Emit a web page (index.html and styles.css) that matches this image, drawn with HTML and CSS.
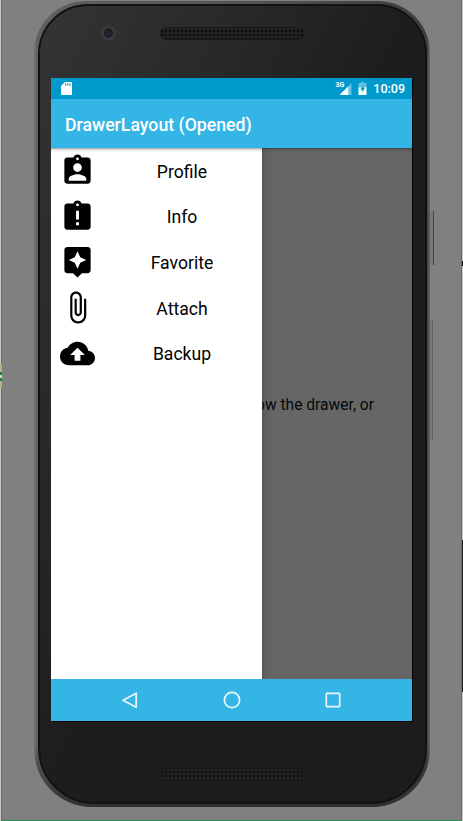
FILE: index.html
```html
<!DOCTYPE html>
<html lang="en">
<head>
<meta charset="utf-8">
<title>DrawerLayout (Opened)</title>
<link rel="stylesheet" href="styles.css">
</head>
<body>
<main class="canvas">
  <i class="mark mark-left"></i><i class="mark mark-right"></i><i class="mark mark-edge"></i>
  <div class="phone">
    <i class="key power"></i><i class="key volume"></i>
    <div class="face">
      <div class="forehead"><i class="camera"></i><i class="speaker"></i></div>
      <div class="screen">
        <div class="status">
          <svg class="sd" width="11" height="13" viewBox="0 0 11 13"><path fill="#fff" d="M4 0h6q1 0 1 1v11q0 1-1 1H1q-1 0-1-1V4z"/><path stroke="#0099cc" stroke-width="1.1" d="M4.6 1.3v2.5M6.8 1.3v2.5M9 1.3v2.5"/></svg>
          <div class="signal"><span>3G</span><svg width="13" height="12" viewBox="0 0 13 12"><path fill="#66c2e0" d="M12.5 0v12H9V3.5z"/><path fill="#fff" d="M9.3 3.2V12H.5z"/></svg></div>
          <svg class="battery" width="9" height="13" viewBox="0 0 9 13"><path fill="#66c2e0" d="M3 0h3v1h2.500v5H.5V1H3z"/><path fill="#fff" d="M.5 5.500h8V13h-8z"/><path fill="#0099cc" d="M5.500 3 2.200 7.500h2v3L7 6.300H5.500z"/></svg>
          <span class="clock">10:09</span>
        </div>
        <header class="appbar"><h1>DrawerLayout (Opened)</h1></header>
        <div class="content">
          <nav class="drawer">
            <div class="row"><svg viewBox="0 0 24 24"><path d="M19 3h-4.180C14.400 1.840 13.300 1 12 1c-1.300 0-2.400.840-2.820 2H5c-1.100 0-2 .9-2 2v14c0 1.100.9 2 2 2h14c1.100 0 2-.9 2-2V5c0-1.100-.9-2-2-2zm-7 0c.55 0 1 .45 1 1s-.45 1-1 1-1-.45-1-1 .45-1 1-1zm0 4c1.660 0 3 1.340 3 3s-1.340 3-3 3-3-1.340-3-3 1.340-3 3-3zm6 12H6v-1.400c0-2 4-3.100 6-3.100s6 1.100 6 3.100V19z"/></svg><span>Profile</span></div>
            <div class="row"><svg viewBox="0 0 24 24"><path d="M19 3h-4.180C14.400 1.840 13.300 1 12 1c-1.300 0-2.400.840-2.820 2H5c-1.100 0-2 .9-2 2v14c0 1.100.9 2 2 2h14c1.100 0 2-.9 2-2V5c0-1.100-.9-2-2-2zm-6 15h-2v-2h2v2zm0-4h-2V8h2v6zm-1-9c-.55 0-1-.45-1-1s.45-1 1-1 1 .45 1 1-.45 1-1 1z"/></svg><span>Info</span></div>
            <div class="row"><svg viewBox="0 0 24 24"><path d="M19 2H5c-1.100 0-2 .9-2 2v14c0 1.100.9 2 2 2h4l3 3 3-3h4c1.100 0 2-.9 2-2V4c0-1.100-.9-2-2-2zm-5.120 10.880L12 17l-1.880-4.120L6 11l4.120-1.880L12 5l1.880 4.120L18 11l-4.120 1.880z"/></svg><span>Favorite</span></div>
            <div class="row"><svg viewBox="0 0 24 24"><path d="M16.500 6v11.500c0 2.210-1.790 4-4 4s-4-1.790-4-4V5c0-1.380 1.120-2.500 2.500-2.500s2.500 1.120 2.500 2.500v10.500c0 .55-.45 1-1 1s-1-.45-1-1V6H10v9.500c0 1.380 1.120 2.500 2.500 2.500s2.500-1.120 2.500-2.500V5c0-2.210-1.790-4-4-4S7 2.790 7 5v12.500c0 3.040 2.460 5.500 5.500 5.500s5.500-2.460 5.500-5.500V6h-1.500z"/></svg><span>Attach</span></div>
            <div class="row"><svg viewBox="0 0 24 24"><path d="M19.350 10.040C18.670 6.590 15.640 4 12 4 9.110 4 6.600 5.640 5.350 8.040 2.340 8.360 0 10.910 0 14c0 3.310 2.690 6 6 6h13c2.760 0 5-2.240 5-5 0-2.640-2.050-4.780-4.650-4.960zM14 13v4h-4v-4H7l5-5 5 5h-3z"/></svg><span>Backup</span></div>
          </nav>
          <div class="behind"><p>ow the drawer, or</p></div>
        </div>
        <div class="navbar">
          <svg viewBox="0 0 18 18"><path d="M15.200 2.200v14L2 9.200z"/></svg>
          <svg viewBox="0 0 18 18"><circle cx="9" cy="9" r="7.600"/></svg>
          <svg viewBox="0 0 18 18"><rect x="2.300" y="2.300" width="13.400" height="13.400" rx=".6"/></svg>
        </div>
      </div>
      <div class="chin"><i class="speaker"></i></div>
    </div>
  </div>
</main>
</body>
</html>
```
FILE: styles.css
```css
* { box-sizing: border-box; }
body { margin: 0; font-family: Roboto, sans-serif; background: #c8c8c8; overflow: hidden; }
.canvas {
  position: relative;
  width: 461px; height: 821px;
  margin-left: 1px;
  padding: 1px 0 0 33px;
  background: #808080;
  border: solid #279153;
  border-width: 0 1px 1px;
  border-left-width: 1px;
}
.mark { position: absolute; }
.mark-left { left: -2px; top: 364px; width: 2px; height: 24px; background: linear-gradient(#b5b283 8px, #168039 8px 11px, #c8e0c8 11px 14px, #168039 14px 17px, #b5b283 17px); }
.mark-right { right: -2px; top: 261px; width: 1px; height: 5px; background: #111; }
.mark-edge { right: -2px; top: 540px; width: 1px; height: 152px; background: #222; }
.phone {
  position: relative;
  width: 396px; height: 806px;
  margin-left: -1px;
  padding: 3px 3px 3px 4px;
  border-radius: 52px 52px 58px 58px;
  background: linear-gradient(90deg, #777 0, #606060 3px, #555 50%, #3e3c3e 393px, #686868 100%);
}
.phone::before {
  content: ""; position: absolute; inset: 0; border-radius: inherit;
  background: linear-gradient(#0000 92%, #303030 100%);
}
.key { position: absolute; background: #777; border-right: 1px solid #444; }
.power { left: 396px; top: 210px; width: 4px; height: 54px; }
.volume { left: 396px; top: 319px; width: 3px; height: 120px; border-color: #606060; }
.face {
  position: relative;
  width: 389px; height: 800px;
  padding: 0 13px;
  border-radius: 50px 50px 56px 56px;
  border: 2px solid #121212;
  background: linear-gradient(115deg, #343435 0, #282828 28%, #1d1d1d 50%, #1c1c1c 100%);
}
.forehead, .chin { margin-left: -2px; }
.forehead { height: 72px; display: flex; padding: 19px 0 0 49px; }
.camera { width: 16px; height: 16px; border-radius: 50%; background: radial-gradient(circle at 53% 50%, #252032 0 2px, #1c1a1f 4px, #3a393a 5px 7px, #343434 8px); }
.speaker {
  width: 145px; height: 13px; border-radius: 7px;
  background: radial-gradient(circle, #0c0c0c .9px, #202020 1.400px) 3px 1px / 4px 4px;
  border: 1px solid #1a1a1a;
}
.forehead .speaker { margin: 2px 0 0 44px; }
.screen { width: 361px; height: 643px; margin-left: -2px; display: flex; flex-direction: column; box-shadow: 1px 1px #000; }
.status { flex: 0 0 21px; display: flex; align-items: center; background: #0099cc; color: #fff; padding: 0 7px 0 10px; }
.signal { display: flex; align-items: flex-end; margin-left: auto; }
.signal svg { margin: 0 0 0 -5px; }
.signal span { font: 700 7px/7px Roboto, sans-serif; align-self: flex-start; margin-top: -1px; }
.battery { margin: 0 6px 0 6px; }
.clock { font-size: 12.500px; font-weight: 500; line-height: 21px; }
.appbar { flex: 0 0 49px; display: flex; align-items: center; padding-left: 14px; background: #33b5e5; color: #fff; }
h1 { margin: 2px 0 0; font-size: 17.700px; font-weight: 500; white-space: nowrap; }
.content { flex: 1; min-height: 0; display: flex; position: relative; }
.content::before { content: ""; position: absolute; z-index: 1; inset: 0 0 auto; height: 4px; background: linear-gradient(#0006, #0002 1.500px, #0000); }
.drawer { flex: 0 0 210.500px; background: #fff; }
.row { display: flex; align-items: center; height: 45.600px; padding-left: 8.500px; }
.row svg { width: 35px; height: 35px; }
.row span { flex: 1; margin: 2px 0 0 8px; text-align: center; font-size: 17.600px; color: #000; }
.behind { flex: 1; min-width: 0; overflow: hidden; background: linear-gradient(90deg, #555 0, #606060 3px, #666 10px); display: flex; align-items: center; justify-content: flex-end; padding: 0 38px 17px 0; }
.behind p { margin: 0; font-size: 15.600px; white-space: nowrap; color: #080808; }
.navbar { flex: 0 0 42px; display: flex; justify-content: space-between; align-items: center; padding: 0 70px; background: #33b5e5; }
.navbar svg { width: 18px; height: 18px; fill: none; stroke: #e9f7fd; stroke-width: 1.700; stroke-linejoin: round; }
.chin { padding: 47px 0 0 109px; display: flex; }
```
